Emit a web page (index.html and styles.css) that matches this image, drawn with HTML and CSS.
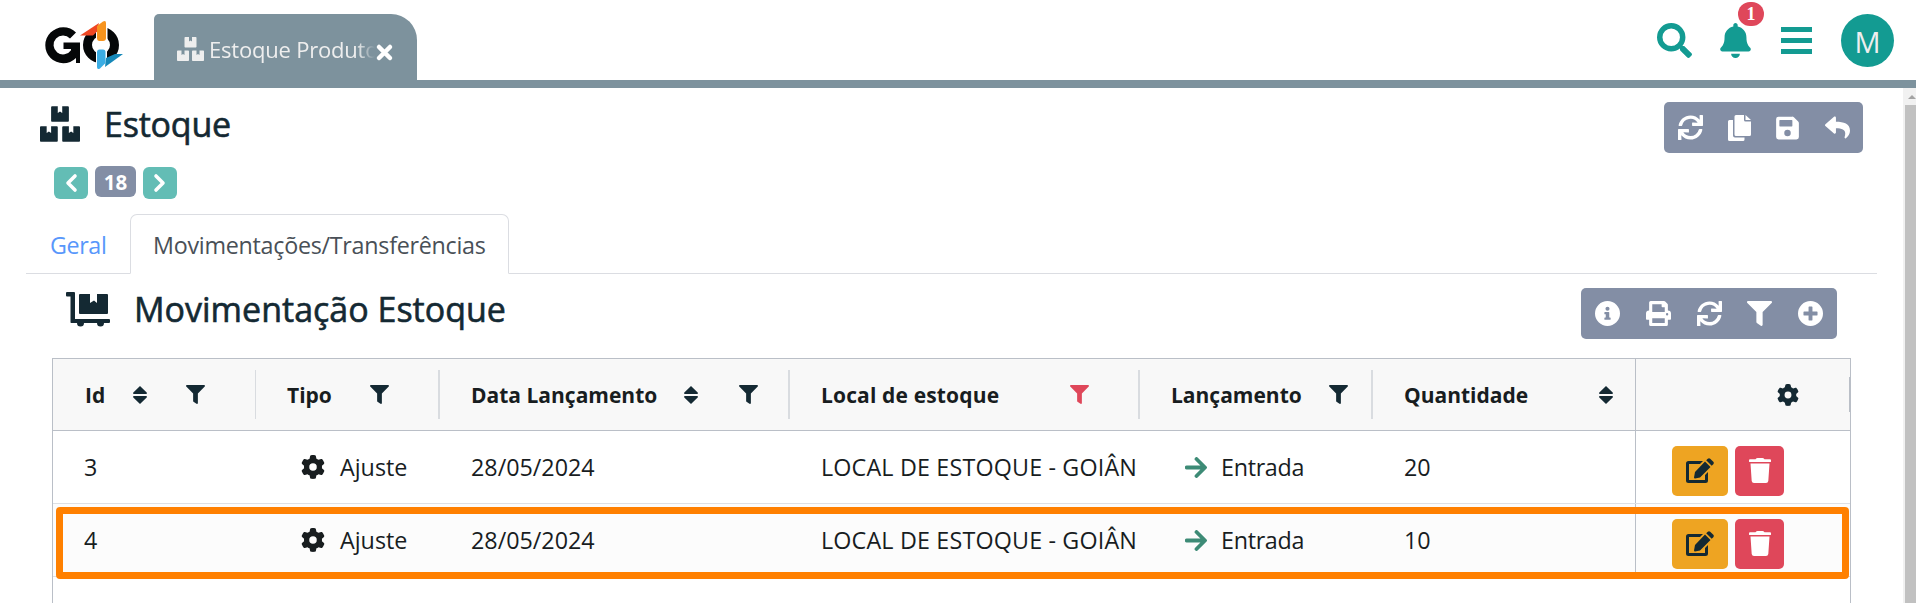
FILE: index.html
```html
<!DOCTYPE html>
<html lang="pt-BR">
<head>
<meta charset="utf-8">
<title>Estoque</title>
<link rel="stylesheet" href="styles.css">
</head>
<body>
<svg class="sprite" aria-hidden="true">
  <symbol id="boxes" viewBox="0 0 576 512"><path d="M560 288h-80v96l-32-21.3-32 21.3v-96h-80c-8.800 0-16 7.200-16 16v192c0 8.800 7.200 16 16 16h224c8.800 0 16-7.200 16-16V304c0-8.800-7.200-16-16-16zM176 224h224c8.800 0 16-7.200 16-16V16c0-8.800-7.200-16-16-16h-80v96l-32-21.300L256 96V0h-80c-8.800 0-16 7.200-16 16v192c0 8.800 7.200 16 16 16zM240 288h-80v96l-32-21.300L96 384v-96H16c-8.800 0-16 7.200-16 16v192c0 8.800 7.200 16 16 16h224c8.800 0 16-7.200 16-16V304c0-8.800-7.200-16-16-16z"/></symbol>
  <symbol id="dolly" viewBox="0 0 44 35"><path d="M0 1Q0 0 1 0H8Q9 0 9 1V27H43Q44 27 44 28V30Q44 31 43 31H38A3.500 3.500 0 1 1 31 31H18A3.500 3.500 0 1 1 11 31H5Q4.500 31 4.500 30V4.500H1Q0 4.500 0 3.500ZM14 2H24V11L28 8.500L31 11V2H41Q42 2 42 3V21Q42 22 41 22H14Q13 22 13 21V3Q13 2 14 2Z"/></symbol>
  <symbol id="gear" viewBox="0 0 512 512"><path fill-rule="evenodd" d="M495.900 166.600c3.200 8.700 .5 18.400-6.400 24.600l-43.300 39.400c1.100 8.300 1.700 16.800 1.700 25.400s-.6 17.100-1.700 25.400l43.300 39.400c6.900 6.200 9.600 15.900 6.400 24.600c-4.400 11.900-9.700 23.300-15.800 34.300l-4.700 8.100c-6.600 11-14 21.400-22.100 31.200c-5.900 7.200-15.700 9.600-24.500 6.800l-55.700-17.700c-13.400 10.300-28.200 18.900-44 25.400l-12.500 57.100c-2 9.100-9 16.300-18.200 17.800c-13.800 2.300-28 3.500-42.500 3.500s-28.700-1.200-42.500-3.500c-9.200-1.500-16.200-8.700-18.200-17.800l-12.500-57.100c-15.800-6.500-30.600-15.100-44-25.400L83.100 425.900c-8.800 2.800-18.600 .3-24.500-6.800c-8.100-9.800-15.500-20.200-22.100-31.200l-4.700-8.100c-6.100-11-11.400-22.400-15.800-34.300c-3.200-8.700-.5-18.400 6.400-24.600l43.300-39.400C64.600 273.100 64 264.600 64 256s.6-17.100 1.700-25.400L22.400 191.200c-6.900-6.200-9.600-15.900-6.400-24.600c4.400-11.900 9.700-23.300 15.800-34.300l4.700-8.100c6.600-11 14-21.400 22.100-31.200c5.900-7.200 15.700-9.600 24.500-6.800l55.700 17.700c13.400-10.300 28.200-18.900 44-25.400l12.500-57.100c2-9.100 9-16.300 18.200-17.800C227.300 1.200 241.500 0 256 0s28.700 1.200 42.500 3.500c9.200 1.500 16.200 8.700 18.200 17.800l12.500 57.100c15.800 6.500 30.600 15.100 44 25.400l55.700-17.700c8.800-2.800 18.600-.3 24.500 6.800c8.100 9.800 15.500 20.200 22.100 31.200l4.700 8.100c6.100 11 11.400 22.400 15.800 34.300zM256 336a80 80 0 1 0 0-160 80 80 0 1 0 0 160z"/></symbol>
  <symbol id="filter" viewBox="0 0 512 512"><path d="M4 54C9 41 22 32 36 32H476C490 32 503 41 508 54S511 81 502 91L320 305V480Q320 500 302 508Q288 512 275 504L205 452Q192 442 192 426V305L10 91C1 81-1 67 4 54Z"/></symbol>
  <symbol id="funnel" viewBox="0 0 512 512"><path d="M488 0H24C2.700 0-8 25.900 7.100 41L192 225.900V432C192 439.800 195.800 447.200 202.200 451.700L282.200 507.700C298 518.700 320 507.500 320 488V225.900L504.900 41C520 25.900 509.300 0 488 0Z"/></symbol>
  <symbol id="sort" viewBox="0 0 14 18"><path d="M7 0L13.700 6.500Q14.500 7.700 13 8H1Q-.5 7.700.3 6.500ZM7 18L.3 11.500Q-.5 10.300 1 10H13Q14.500 10.300 13.700 11.500Z"/></symbol>
  <symbol id="sync" viewBox="0 0 512 512"><path d="M440.650 12.570l4 82.770A247.160 247.160 0 0 0 255.830 8C134.730 8 33.910 94.920 12.290 209.820A12 12 0 0 0 24.090 224h49.050a12 12 0 0 0 11.670-9.260 175.910 175.910 0 0 1 317-56.940l-101.460-4.860a12 12 0 0 0-12.570 12v47.410a12 12 0 0 0 12 12H500a12 12 0 0 0 12-12V12a12 12 0 0 0-12-12h-47.370a12 12 0 0 0-11.980 12.570zM255.830 432a175.610 175.610 0 0 1-146-77.800l101.800 4.870a12 12 0 0 0 12.570-12v-47.400a12 12 0 0 0-12-12H12a12 12 0 0 0-12 12V500a12 12 0 0 0 12 12h47.350a12 12 0 0 0 12-12.600l-4.150-82.570A247.170 247.170 0 0 0 255.830 504c121.110 0 221.930-86.920 243.550-201.820a12 12 0 0 0-11.800-14.180h-49.050a12 12 0 0 0-11.670 9.260A175.860 175.860 0 0 1 255.830 432z"/></symbol>
  <symbol id="copy" viewBox="0 0 23 26"><path d="M8 0H16V5Q16 6.500 17.500 6.500H23V19.500Q23 21 21.500 21H8Q6.500 21 6.500 19.500V1.500Q6.500 0 8 0ZM17.500 0L23 5H17.500ZM1.500 5H5V20.500Q5 22.500 7 22.500H16.500V24.500Q16.500 26 15 26H1.500Q0 26 0 24.500V6.500Q0 5 1.500 5Z"/></symbol>
  <symbol id="save" viewBox="0 0 448 512"><path fill-rule="evenodd" d="M434 130L350 46A48 48 0 0 0 316 32H48A48 48 0 0 0 0 80V432A48 48 0 0 0 48 480H400A48 48 0 0 0 448 432V164A48 48 0 0 0 434 130ZM224 416A64 64 0 1 1 224 288A64 64 0 1 1 224 416ZM64 108Q64 96 76 96H308Q320 96 320 108V212Q320 224 308 224H76Q64 224 64 212Z"/></symbol>
  <symbol id="reply" viewBox="0 0 512 512"><path d="M8.300 189.900L184.300 37.900C199.700 24.600 224 35.300 224 56V136.100C384.600 137.900 512 170.100 512 322.300C512 383.700 472.400 444.600 428.700 476.400C415 486.400 395.600 473.900 400.600 457.700C445.900 312.900 379.100 274.400 224 272.200V360C224 380.700 199.700 391.400 184.300 378.100L8.300 226.100C-2.800 216.600-2.800 199.500 8.300 189.900Z"/></symbol>
  <symbol id="search" viewBox="0 0 512 512"><path fill-rule="evenodd" d="M505 442.700L405.300 343C400.800 338.500 394.700 336 388.300 336H372C399.600 300.700 416 256.300 416 208A208 208 0 1 0 208 416C256.300 416 300.700 399.600 336 372V388.300C336 394.700 338.500 400.800 343 405.300L442.700 505C452.100 514.400 467.300 514.400 476.600 505L504.900 476.700C514.300 467.300 514.300 452.100 505 442.700ZM208 336A128 128 0 1 1 208 80A128 128 0 0 1 208 336Z"/></symbol>
  <symbol id="bell" viewBox="0 0 448 512"><path d="M224 512c35.320 0 63.970-28.650 63.970-64H160.030c0 35.350 28.650 64 63.970 64zm215.390-149.710c-19.320-20.760-55.470-51.990-55.470-154.290 0-77.700-54.480-139.900-127.940-155.160V32c0-17.670-14.320-32-31.980-32s-31.980 14.330-31.980 32v20.840C118.560 68.100 64.080 130.300 64.080 208c0 102.300-36.150 133.530-55.470 154.290-6 6.450-8.660 14.160-8.610 21.710.11 16.400 12.980 32 32.100 32h383.800c19.120 0 32-15.600 32.100-32 .05-7.550-2.610-15.270-8.610-21.710z"/></symbol>
  <symbol id="info" viewBox="0 0 512 512"><path fill-rule="evenodd" d="M256 0a256 256 0 1 0 0 512a256 256 0 1 0 0-512zM256 116a42 42 0 1 1 0 84a42 42 0 1 1 0-84zM204 224H280Q292 224 292 236V336H308Q320 336 320 348V372Q320 384 308 384H204Q192 384 192 372V348Q192 336 204 336H220V272H204Q192 272 192 260V236Q192 224 204 224Z"/></symbol>
  <symbol id="plus" viewBox="0 0 512 512"><path fill-rule="evenodd" d="M256 0a256 256 0 1 0 0 512a256 256 0 1 0 0-512zM216 122Q216 112 226 112H286Q296 112 296 122V216H390Q400 216 400 226V286Q400 296 390 296H296V390Q296 400 286 400H226Q216 400 216 390V296H122Q112 296 112 286V226Q112 216 122 216H216Z"/></symbol>
  <symbol id="print" viewBox="0 0 512 512"><path fill-rule="evenodd" d="M448 192V77a32 32 0 0 0-9-22L393 9A32 32 0 0 0 371 0H96A32 32 0 0 0 64 32V192A64 64 0 0 0 0 256V368A16 16 0 0 0 16 384H64V480A32 32 0 0 0 96 512H416A32 32 0 0 0 448 480V384H496A16 16 0 0 0 512 368V256A64 64 0 0 0 448 192ZM384 448H128V352H384ZM384 224H128V64H320V112A16 16 0 0 0 336 128H384ZM432 296A24 24 0 1 1 432 248A24 24 0 1 1 432 296Z"/></symbol>
  <symbol id="edit" viewBox="0 0 28 25"><path fill-rule="evenodd" d="M2.500 3H17L14 6H3V22H19V17L22 14V22.500Q22 25 19.500 25H2.500Q0 25 0 22.500V5.500Q0 3 2.500 3ZM19 3.500L24.500 9L14 19.500L9 20.500Q8 20.500 8 19.500L9 14ZM20.200 2.300L21.800.700Q23 -.3 24.200.700L27.300 3.800Q28.300 5 27.300 6.200L25.700 7.800Z"/></symbol>
  <symbol id="trash" viewBox="0 0 22 25"><path d="M1 1.300H6.500L7.500.3Q8 0 8.500 0H13.500Q14 0 14.500.3L15.500 1.300H21Q22 1.300 22 2.300V3.500Q22 4 21 4H1Q0 4 0 3.500V2.300Q0 1.300 1 1.300ZM1.500 5.500H20.500L19.300 23Q19 25 17 25H5Q3 25 2.700 23Z"/></symbol>
  <symbol id="arrow" viewBox="0 0 22 21"><path d="M1.700 10.500H19M11.500 2L20 10.500L11.500 19" fill="none" stroke="currentColor" stroke-width="3.800" stroke-linecap="round" stroke-linejoin="round"/></symbol>
</svg>

<header class="topbar">
  <svg class="logo" viewBox="0 0 79 50">
    <path d="M31 12.500A18 18 0 1 0 31 38V43H35V22.500H18.500V29H26V30.200A9.500 9.500 0 1 1 25 18.500Z" fill="#050708"/>
    <circle cx="56" cy="25" r="13.500" fill="none" stroke="#050708" stroke-width="9"/>
    <path d="M51 4V21H62.500V4ZM51 28V46H62V28Z" fill="#fff"/>
    <path d="M35 15.500L54 3L52 11.500L48 15.500Z" fill="#ef4723"/>
    <path d="M78 34L60 47L61 38L70 34Z" fill="#1688b8"/>
    <path d="M52 6L58 1.500Q61 0 61 3V18Q61 21 58 21H54.500Q52 21 52 18Z" fill="#f7941e"/>
    <path d="M52 32Q52 29.500 54.500 29.500H58Q60.500 29.500 60.500 32V43L55 48.500Q52 50 52 47Z" fill="#3bade4"/>
  </svg>
  <div class="worktab">
    <svg class="worktab-icon"><use href="#boxes"/></svg>
    <span class="worktab-label">Estoque Produto</span>
    <svg class="worktab-close" viewBox="0 0 17 17"><path d="M3 3L14 14M14 3L3 14"/></svg>
  </div>
  <nav class="top-actions">
    <svg class="i-search"><use href="#search"/></svg>
    <span class="notify"><svg class="i-bell"><use href="#bell"/></svg><b class="badge">1</b></span>
    <svg class="i-bars" viewBox="0 0 31 27"><path d="M0 0H31V5H0ZM0 11H31V16H0ZM0 22H31V27H0Z"/></svg>
    <span class="avatar">M</span>
  </nav>
</header>

<main class="page">
  <div class="content">
    <div class="title-row">
      <svg class="title-icon"><use href="#boxes"/></svg>
      <h1>Estoque</h1>
      <div class="toolbar toolbar-main">
        <svg class="sq"><use href="#sync"/></svg>
        <svg class="cp"><use href="#copy"/></svg>
        <svg class="sv"><use href="#save"/></svg>
        <svg class="sq"><use href="#reply"/></svg>
      </div>
    </div>
    <div class="pager">
      <span class="step"><svg viewBox="0 0 12 18"><path d="M10 2L3 9L10 16"/></svg></span>
      <span class="num">18</span>
      <span class="step"><svg viewBox="0 0 12 18"><path d="M2 2L9 9L2 16"/></svg></span>
    </div>
    <div class="tabs">
      <span class="tab link">Geral</span>
      <span class="tab active">Movimentações/Transferências</span>
    </div>
    <div class="sub-row">
      <svg class="sub-icon"><use href="#dolly"/></svg>
      <h2>Movimentação Estoque</h2>
      <div class="toolbar toolbar-grid">
        <svg class="sq"><use href="#info"/></svg>
        <svg class="sq"><use href="#print"/></svg>
        <svg class="sq"><use href="#sync"/></svg>
        <svg class="sq"><use href="#funnel"/></svg>
        <svg class="sq"><use href="#plus"/></svg>
      </div>
    </div>
    <div class="grid">
      <div class="row head">
        <div class="cell c-id"><span>Id</span><svg class="sort"><use href="#sort"/></svg><svg class="filter"><use href="#funnel"/></svg></div>
        <div class="cell c-tipo"><span>Tipo</span><svg class="filter"><use href="#funnel"/></svg></div>
        <div class="cell c-data"><span>Data Lançamento</span><svg class="sort"><use href="#sort"/></svg><svg class="filter"><use href="#funnel"/></svg></div>
        <div class="cell c-local"><span>Local de estoque</span><svg class="filter on"><use href="#funnel"/></svg></div>
        <div class="cell c-lanc"><span>Lançamento</span><svg class="filter"><use href="#funnel"/></svg></div>
        <div class="cell c-qtd"><span>Quantidade</span><svg class="sort"><use href="#sort"/></svg></div>
        <div class="cell pinned"><svg class="config"><use href="#gear"/></svg></div>
      </div>
      <div class="row">
        <div class="cell">3</div>
        <div class="cell kind"><svg class="kind-icon"><use href="#gear"/></svg><span>Ajuste</span></div>
        <div class="cell date">28/05/2024</div>
        <div class="cell place">LOCAL DE ESTOQUE - GOIÂN</div>
        <div class="cell entry"><svg class="entry-icon"><use href="#arrow"/></svg><span>Entrada</span></div>
        <div class="cell">20</div>
        <div class="cell pinned actions"><span class="btn edit"><svg><use href="#edit"/></svg></span><span class="btn del"><svg><use href="#trash"/></svg></span></div>
      </div>
      <div class="row selected">
        <div class="cell">4</div>
        <div class="cell kind"><svg class="kind-icon"><use href="#gear"/></svg><span>Ajuste</span></div>
        <div class="cell date">28/05/2024</div>
        <div class="cell place">LOCAL DE ESTOQUE - GOIÂN</div>
        <div class="cell entry"><svg class="entry-icon"><use href="#arrow"/></svg><span>Entrada</span></div>
        <div class="cell">10</div>
        <div class="cell pinned actions"><span class="btn edit"><svg><use href="#edit"/></svg></span><span class="btn del"><svg><use href="#trash"/></svg></span></div>
      </div>
    </div>
  </div>
  <div class="scrollbar"><i class="up"></i><i class="thumb"></i></div>
</main>
</body>
</html>
```

FILE: styles.css
```css
*, *::before, *::after { box-sizing: border-box; }
html, body { height: 100%; }
body {
  margin: 0;
  overflow: hidden;
  display: flex;
  flex-direction: column;
  background: #fff;
  color: #181d1f;
  font: 23.300px/36px "Open Sans", "Noto Sans", sans-serif;
}
.sprite { display: none; }
svg { display: block; flex: none; fill: currentColor; overflow: visible; }
h1, h2 { margin: 0; font-weight: 500; font-size: 34px; line-height: 48px; color: #142933; white-space: nowrap; -webkit-text-stroke: .6px #142933; }

.topbar { flex: none; display: flex; height: 88px; border-bottom: 8px solid #7d929d; }
.logo { width: 79px; height: 50px; margin: 20px 30px 0 45px; }
.worktab {
  display: flex;
  width: 263px;
  height: 66px;
  margin-top: 14px;
  padding-left: 23px;
  background: #7d929d;
  color: #eee;
  border-radius: 5px 26px 0 0;
}
.worktab-icon { width: 27px; height: 24px; margin-top: 23px; }
.worktab-label {
  width: 167px;
  margin: 17px 0 0 5px;
  overflow: hidden;
  white-space: nowrap;
  font-size: 22px;
  letter-spacing: -.2px;
  -webkit-mask-image: linear-gradient(90deg, #000 148px, transparent 166px);
  mask-image: linear-gradient(90deg, #000 148px, transparent 166px);
}
.worktab-close { width: 17px; height: 17px; margin: 30px 0 0; fill: none; stroke: #fff; stroke-width: 4.500; stroke-linecap: round; }
.top-actions { display: flex; margin-left: auto; padding-right: 22px; color: #139b92; }
.i-search { width: 35px; height: 35px; margin: 23px 28px 0 0; }
.notify { position: relative; height: 80px; }
.i-bell { width: 31px; height: 35px; margin-top: 23px; }
.badge {
  position: absolute;
  left: 18px;
  top: 2px;
  width: 26px;
  height: 24px;
  border-radius: 12px;
  background: #df475a;
  color: #fff;
  text-align: center;
  font: 700 18px/24px "Liberation Serif", serif;
}
.i-bars { width: 31px; height: 27px; margin: 27px 29px 0 30px; }
.avatar { width: 53px; height: 53px; margin-top: 14px; border-radius: 50%; background: #139b92; color: #eee; text-align: center; font-size: 29px; line-height: 55px; }

.page { flex: 1; min-height: 0; display: flex; }
.content { flex: 1; min-width: 0; padding: 14px 26px 0; overflow: hidden; }
.title-row { display: flex; height: 64px; padding: 0 14px; }
.title-icon { width: 40px; height: 36px; margin-top: 4px; color: #142933; }
.title-row h1 { margin: -2px 0 0 24px; letter-spacing: -.2px; }
.toolbar { display: flex; align-items: center; justify-content: space-between; height: 51px; margin-left: auto; border-radius: 5px; background: #838ea5; color: #fff; }
.toolbar-main { width: 199px; padding: 0 13px 0 14px; }
.toolbar-grid { width: 256px; padding: 0 14px; margin-top: 14px; }
.toolbar .sq { width: 25px; height: 25px; }
.toolbar .cp { width: 23px; height: 26px; }
.toolbar .sv { width: 23px; height: 26px; margin-right: 1px; }
.pager { display: flex; gap: 7px; height: 48px; padding-left: 28px; }
.step { width: 34px; height: 32px; margin-top: 1px; border-radius: 6px; background: #63bdb5; display: grid; place-items: center; }
.step svg { width: 12px; height: 18px; fill: none; stroke: #fff; stroke-width: 3.600; stroke-linecap: round; stroke-linejoin: round; }
.num { width: 41px; height: 31px; border-radius: 6px; background: #838ea5; color: #fff; text-align: center; font-weight: 700; font-size: 20.500px; line-height: 33px; }
.tabs { display: flex; height: 60px; border-bottom: 1px solid #dbdde2; }
.tab { height: 60px; padding: 12px 22px 0; border: 1px solid transparent; white-space: nowrap; letter-spacing: -.27px; }
.link { width: 104px; padding-left: 23px; color: #5897fb; letter-spacing: -.4px; }
.active { width: 379px; border-color: #dbdde2; border-bottom-color: #fff; border-radius: 7px 7px 0 0; background: #fff; color: #495057; }
.sub-row { display: flex; height: 84px; padding: 0 40px; }
.sub-icon { width: 44px; height: 35px; margin-top: 18px; color: #142933; }
.sub-row h2 { margin: 11px 0 0 24px; }

.grid { position: relative; width: 1799px; height: 245px; margin-left: 26px; border: 1px solid #babfc7; border-bottom: 0; }
.row { display: grid; grid-template-columns: 203px 184px 350px 350px 233px 262px 1fr; height: 73px; border-bottom: 1px solid #dde0e5; }
.cell { min-width: 0; padding-left: 31px; display: flex; align-items: center; white-space: nowrap; overflow: hidden; }
.pinned { border-left: 1px solid #babfc7; }
.head { height: 72px; background: #f8f8f8; border-bottom: 1px solid #babfc7; font-weight: 700; font-size: 21px; }
.head .cell { background: linear-gradient(#d9dce0, #d9dce0) right 50% / 2px 49px no-repeat; }
.head .c-id { background-size: 1px 49px; }
.head .c-qtd { background: none; }
.head .pinned { background: linear-gradient(#babfc7, #babfc7) right 50% / 1px 35px no-repeat; }
.sort { width: 14px; height: 18px; margin-left: 27px; color: #142933; }
.c-id .sort { margin-left: 28px; }
.filter { width: 19px; height: 19px; margin-left: auto; color: #142933; }
.filter.on { color: #df475a; }
.c-id { padding-left: 32px; padding-right: 51px; }
.c-tipo { padding-right: 51px; }
.c-data { padding-right: 32px; }
.c-local { padding-right: 51px; letter-spacing: .15px; }
.c-lanc { padding-right: 25px; }
.c-qtd { padding-right: 22px; }
.c-qtd .sort { margin-left: auto; }
.config { width: 22px; height: 22px; margin-left: 110px; color: #142933; }
.place { letter-spacing: .17px; }
.kind { padding-left: 45px; }
.kind-icon { width: 24px; height: 24px; margin-right: 15px; }
.entry { padding-left: 45px; letter-spacing: -.3px; }
.entry-icon { width: 22px; height: 21px; margin-right: 14px; color: #3d8b76; }
.actions { padding: 7px 0 0 36px; gap: 7px; }
.btn { display: grid; place-items: center; height: 50px; border-radius: 5px; }
.btn.edit { width: 56px; background: #eea422; color: #142933; }
.btn.del { width: 49px; background: #df475a; color: #fff; }
.btn.edit svg { width: 28px; height: 25px; }
.btn.del svg { width: 22px; height: 25px; }
.selected { position: relative; background: #fcfcfc; }
.selected::after {
  content: "";
  position: absolute;
  left: 3px;
  right: 1px;
  top: 3px;
  height: 72px;
  border: 7px solid #ff8000;
  border-radius: 4px;
}

.scrollbar { width: 13px; background: #f1f1f1; padding-left: 2px; display: flex; flex-direction: column; }
.up { height: 17px; flex: none; padding: 7px 0 0 3px; }
.up::before { content: ""; display: block; width: 8px; height: 4px; border: 4px solid transparent; border-top: 0; border-bottom-color: #a3a3a3; }
.thumb { flex: 1; background: #c1c1c1; }
```
